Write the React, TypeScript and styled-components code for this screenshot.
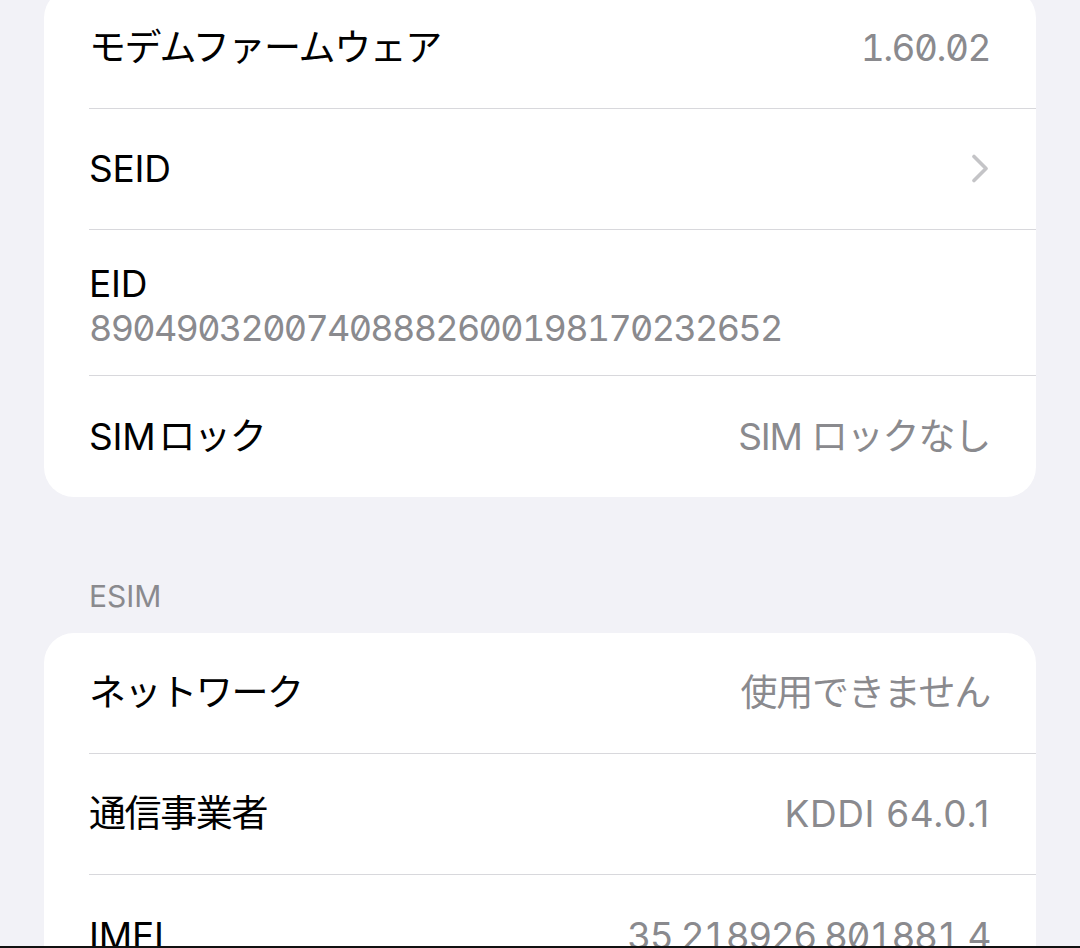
import React from "react";
import styled, { createGlobalStyle } from "styled-components";

const GlobalStyle = createGlobalStyle`
  html, body { margin: 0; padding: 0; background: #f2f2f7; }
  body {
    font-family: Inter, "Noto Sans CJK JP", "Noto Sans", sans-serif;
    -webkit-font-smoothing: antialiased;
  }
`;

const Page = styled.div`
  box-sizing: border-box;
  height: 948px;
  overflow: hidden;
  background: #f2f2f7;
  border-bottom: 2px solid #111;
  padding: 0 44px;
  display: flex;
  flex-direction: column;
`;

const Card = styled.div<{ $offset?: number }>`
  background: #ffffff;
  border-radius: 30px;
  margin-top: ${(p) => p.$offset ?? 0}px;
  flex-shrink: 0;
`;

const Row = styled.div<{ $last?: boolean; $tall?: boolean }>`
  box-sizing: border-box;
  margin-left: 45px;
  padding-right: 46px;
  height: ${(p) => (p.$tall ? 146 : 121)}px;
  border-bottom: ${(p) => (p.$last ? "none" : "1px solid #d8d8dc")};
  display: flex;
  align-items: center;
  justify-content: space-between;
`;

const Stack = styled.div`
  display: flex;
  flex-direction: column;
  padding-top: 7px;
`;

const Label = styled.span`
  font-size: 37px;
  line-height: 44px;
  color: #000;
  letter-spacing: -0.2px;
`;

const JLabel = styled(Label)<{ $gap?: number }>`
  letter-spacing: -1.4px;
  margin-left: ${(p) => p.$gap ?? 0}px;
`;

type Variant = "mono" | "latin" | "ja";

const spacing: Record<Variant, string> = {
  mono: "-1.5px",
  latin: "0.6px",
  ja: "-1.2px",
};

const Value = styled.span<{ $variant: Variant }>`
  font-size: 37px;
  line-height: 44px;
  color: #8a8a8e;
  letter-spacing: ${(p) => spacing[p.$variant]};
  font-feature-settings: ${(p) =>
    p.$variant === "mono" ? '"tnum" 1, "zero" 1' : "normal"};
`;

const SubValue = styled.span`
  font-size: 36px;
  line-height: 44px;
  color: #8a8a8e;
  letter-spacing: -1.7px;
  font-feature-settings: "tnum" 1, "zero" 1;
`;

const SectionHeader = styled.div`
  box-sizing: border-box;
  flex-shrink: 0;
  height: 136px;
  padding: 0 0 19px 45px;
  display: flex;
  align-items: flex-end;
  font-size: 30px;
  line-height: 36px;
  color: #8a8a8e;
`;

const Chevron = () => (
  <svg width="20" height="30" viewBox="0 0 20 30" fill="none">
    <path
      d="M4 2.5 L16 14.5 L4 26.5"
      stroke="#c4c4c7"
      strokeWidth="3.6"
      strokeLinecap="round"
      strokeLinejoin="round"
    />
  </svg>
);

export default function App() {
  return (
    <>
      <GlobalStyle />
      <Page>
        <Card $offset={-12}>
          <Row>
            <JLabel>モデムファームウェア</JLabel>
            <Value $variant="mono">1.60.02</Value>
          </Row>
          <Row>
            <Label>SEID</Label>
            <Chevron />
          </Row>
          <Row $tall>
            <Stack>
              <Label>EID</Label>
              <SubValue>89049032007408882600198170232652</SubValue>
            </Stack>
          </Row>
          <Row $last>
            <Label>
              SIM<JLabel $gap={3}>ロック</JLabel>
            </Label>
            <Value $variant="ja">SIM ロックなし</Value>
          </Row>
        </Card>
        <SectionHeader>ESIM</SectionHeader>
        <Card>
          <Row>
            <JLabel>ネットワーク</JLabel>
            <Value $variant="ja">使用できません</Value>
          </Row>
          <Row>
            <JLabel>通信事業者</JLabel>
            <Value $variant="latin">KDDI 64.0.1</Value>
          </Row>
          <Row $last>
            <Label>IMEI</Label>
            <Value $variant="mono">35 218926 801881 4</Value>
          </Row>
        </Card>
      </Page>
    </>
  );
}
